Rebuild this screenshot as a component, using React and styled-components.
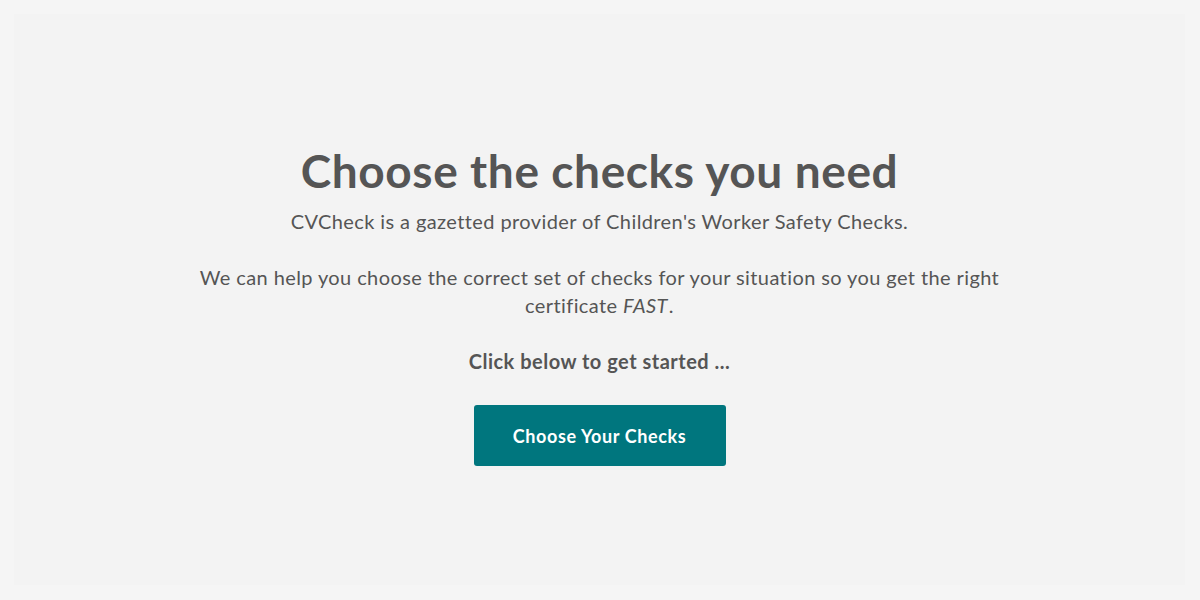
import React from "react";
import styled, { createGlobalStyle } from "styled-components";

const GlobalStyle = createGlobalStyle`
  html, body {
    margin: 0;
    padding: 0;
    background: #f5f5f5;
  }
  body {
    font-family: Lato, "Noto Sans", sans-serif;
    color: #555555;
  }
`;

const Page = styled.div`
  height: 600px;
  box-sizing: border-box;
  padding: 14px 15px 15px 14px;
`;

const Panel = styled.section`
  height: 100%;
  background: #f3f3f3;
  display: flex;
  flex-direction: column;
  align-items: center;
  justify-content: center;
  text-align: center;
`;

const Inner = styled.div`
  width: 820px;
  display: flex;
  flex-direction: column;
  align-items: center;
  padding-top: 12px;
`;

const Title = styled.h1`
  margin: 0 0 10px;
  font-size: 46px;
  font-weight: 700;
  line-height: 52px;
  letter-spacing: 0.6px;
  color: #555555;
`;

const Text = styled.p`
  margin: 0 0 28px;
  font-size: 20px;
  line-height: 28px;
  letter-spacing: ${(p) => (p.$bold ? "0.5px" : "0.4px")};
  font-weight: ${(p) => (p.$bold ? 700 : 400)};
`;

const Lead = styled.em`
  letter-spacing: 0.4px;
  padding-right: 1px;
`;

const ChooseBtn = styled.button`
  margin-top: 2px;
  width: 252px;
  height: 61px;
  border: none;
  border-radius: 3px;
  background: #00767e;
  color: #ffffff;
  font-family: inherit;
  font-size: 18px;
  font-weight: 700;
  letter-spacing: 0.6px;
  cursor: pointer;
`;

export default function App() {
  return (
    <>
      <GlobalStyle />
      <Page>
        <Panel>
          <Inner>
            <Title>Choose the checks you need</Title>
            <Text>CVCheck is a gazetted provider of Children's Worker Safety Checks.</Text>
            <Text>
              We can help you choose the correct set of checks for your situation so you get the right
              certificate <Lead>FAST</Lead>.
            </Text>
            <Text $bold>Click below to get started ...</Text>
            <ChooseBtn>Choose Your Checks</ChooseBtn>
          </Inner>
        </Panel>
      </Page>
    </>
  );
}
